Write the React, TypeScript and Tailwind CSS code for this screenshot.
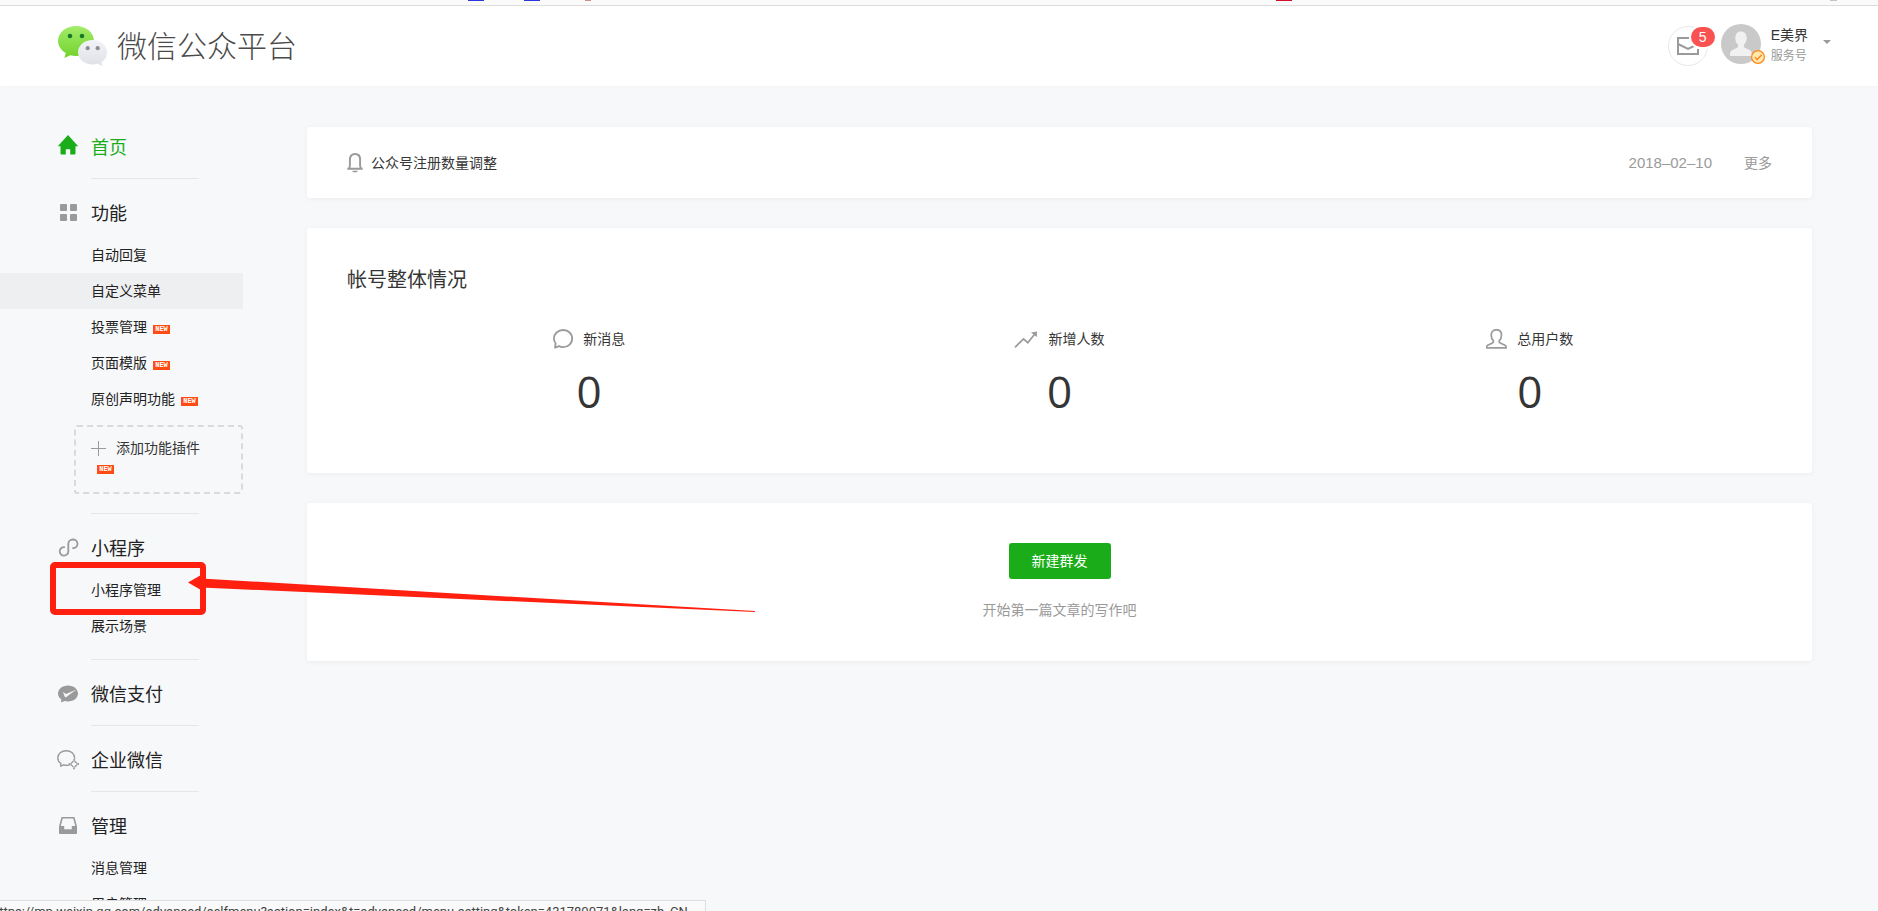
import type { ReactNode } from 'react'

type NavItem = { name: string; isNew?: boolean; active?: boolean; marked?: boolean }

type NavSection = {
  id: string
  name: string
  icon: ReactNode
  current?: boolean
  items?: NavItem[]
  plugin?: boolean
}

function HomeIcon() {
  return (
    <svg viewBox="0 1 22 22" className="h-[22px] w-[22px] overflow-visible" fill="#1aad19" aria-hidden="true">
      <path d="M11 0 .8 11.2h2.700v7.300c0 .6.4 1 1 1h4.300v-5.200h4.400v5.200h4.300c.6 0 1-.4 1-1v-7.300h2.700z" />
    </svg>
  )
}

function GridIcon() {
  return (
    <svg viewBox="0 0 22 22" className="h-[22px] w-[22px]" fill="#9a9a9a" aria-hidden="true">
      <rect x="3" y="2" width="7" height="7" rx="1" />
      <rect x="13" y="2" width="7" height="7" rx="1" />
      <rect x="3" y="12" width="7" height="7" rx="1" />
      <rect x="13" y="12" width="7" height="7" rx="1" />
    </svg>
  )
}

function MiniProgramIcon() {
  return (
    <svg viewBox="0 0 22 22" className="h-[22px] w-[22px]" fill="none" stroke="#9a9a9a" strokeWidth="1.8" strokeLinecap="round" aria-hidden="true">
      <path d="M7.2 10.1A4.300 4.300 0 1 0 11.300 14.400V6.800A4.600 4.300 0 1 1 16 11.100" />
    </svg>
  )
}

function PayIcon() {
  return (
    <svg viewBox="0 0 22 22" className="h-[22px] w-[22px]" aria-hidden="true">
      <path d="M11 2.400c5.600 0 10 3.600 10 8s-4.400 8-10 8c-1.200 0-2.300-.2-3.300-.5L4 19.500l.3-3.300C2.300 14.800 1 12.700 1 10.400c0-4.400 4.500-8 10-8z" fill="#9a9a9a" />
      <path d="m5.900 8.900 3.100 2 10.800-4.400c-3.300 2.100-7 4.800-10.400 7.500-.7.500-1.300.3-1.600-.3z" fill="#f7f8fa" />
    </svg>
  )
}

function WorkIcon() {
  return (
    <svg viewBox="0 0 22 22" className="h-[22px] w-[22px]" fill="none" stroke="#9a9a9a" strokeWidth="1.400" strokeLinejoin="round" aria-hidden="true">
      <path d="M12.600 16c-1 .3-2.200.4-3.400.3-1 0-1.800-.2-2.600-.5L3.700 17.200l.2-2.700C1.900 13 .8 11.100.8 8.900.8 5 4.500 1.700 9.200 1.700c4.700 0 8.400 3.300 8.400 7.200v.9" />
      <path d="m17 11.500 3.600 3.600-3.600 3.600-3.600-3.600z" strokeWidth="1.300" strokeDasharray="3.600 1.500" strokeDashoffset="-.8" />
      <path d="M17.200 10.700v.4M21 15h.4M17 19.200v.3M13 15h-.4" strokeWidth="1.800" strokeLinecap="round" />
    </svg>
  )
}

function ManageIcon() {
  return (
    <svg viewBox="0 0 22 22" className="h-[22px] w-[22px]" fill="#9a9a9a" aria-hidden="true">
      <path
        fillRule="evenodd"
        d="M5.300 2h11.400c.6 0 1 .3 1.100.9L20 11.500V18c0 .6-.4 1-1 1H3c-.6 0-1-.4-1-1v-6.500l2.200-8.600c.1-.6.5-.9 1.100-.9zm.5 1.500L3.800 11h3.400v3.200h7.600V11h3.400l-2-7.500z"
      />
    </svg>
  )
}

const sections: NavSection[] = [
  { id: 'home', name: '首页', icon: <HomeIcon />, current: true },
  {
    id: 'features',
    name: '功能',
    icon: <GridIcon />,
    plugin: true,
    items: [
      { name: '自动回复' },
      { name: '自定义菜单', active: true },
      { name: '投票管理', isNew: true },
      { name: '页面模版', isNew: true },
      { name: '原创声明功能', isNew: true },
    ],
  },
  {
    id: 'mini',
    name: '小程序',
    icon: <MiniProgramIcon />,
    items: [{ name: '小程序管理', marked: true }, { name: '展示场景' }],
  },
  { id: 'pay', name: '微信支付', icon: <PayIcon /> },
  { id: 'work', name: '企业微信', icon: <WorkIcon /> },
  {
    id: 'manage',
    name: '管理',
    icon: <ManageIcon />,
    items: [{ name: '消息管理' }, { name: '用户管理' }],
  },
]

const stats = [
  {
    name: '新消息',
    value: 0,
    icon: (
      <svg viewBox="0 0 20 20" className="h-5 w-5" fill="none" stroke="#9a9a9a" strokeWidth="1.800" strokeLinejoin="round" aria-hidden="true">
        <path d="M10.200 1c5.200 0 9 3.800 9 8.500s-3.800 8.600-9 8.600c-1.500 0-3-.3-4.200-1l-3.900 1.500.5-4.300C1.500 12.900.9 11.300.9 9.500.9 4.800 5 1 10.200 1z" />
      </svg>
    ),
  },
  {
    name: '新增人数',
    value: 0,
    icon: (
      <svg viewBox="0 0 24 20" className="h-5 w-6" fill="none" stroke="#9a9a9a" strokeWidth="1.700" aria-hidden="true">
        <path d="m1 18.300 8.500-8.500 4.300 3.900 7-8.700" />
        <path d="m17 3.400 6-1-.2 5.600z" fill="#9a9a9a" stroke="none" />
      </svg>
    ),
  },
  {
    name: '总用户数',
    value: 0,
    icon: (
      <svg viewBox="0 0 21 20" className="h-5 w-[21px]" fill="none" stroke="#9a9a9a" strokeWidth="1.700" strokeLinejoin="round" aria-hidden="true">
        <path d="M10.300.8c3.200 0 5.200 2.200 5.200 5.300 0 2.400-.8 4.400-2.200 5.600-.4 1.400.1 1.900 1.400 2.500l4.300 2.100c.8.400 1.200 1.100 1.200 2.600H.6c0-1.500.3-2.200 1.100-2.600L6 14.200c1.300-.6 1.700-1.100 1.300-2.500C6 10.500 5.200 8.500 5.200 6.100c0-3.100 2-5.300 5.100-5.300z" />
      </svg>
    ),
  },
]

function NewTag() {
  return (
    <span className="ml-[6px] mt-1 flex h-[9px] w-[17px] shrink-0 items-center justify-center bg-[#ff4c14] font-['Liberation_Mono',monospace] text-[7px] leading-none font-bold text-white">
      NEW
    </span>
  )
}

// Red frame and arrow drawn over the menu entry
function Marker() {
  return (
    <>
      <span className="pointer-events-none absolute -top-[10px] left-[50px] z-10 h-[53px] w-[156px] rounded-[5px] border-[6px] border-[#ff2010]" />
      <svg viewBox="0 0 567 37" className="pointer-events-none absolute top-[3px] left-[188px] z-10 h-[37px] w-[567px]" fill="#ff2010" aria-hidden="true">
        <path d="M0 7.500 13 0v3.500L567 36v1L13 12.500V15z" />
      </svg>
    </>
  )
}

function Header() {
  return (
    <header className="flex h-20 items-center justify-between bg-white pr-[47px] pl-[58px] shadow-[0_1px_3px_rgba(0,0,0,0.02)]">
      <a href="#" className="flex items-center gap-[10px] text-[30px] leading-10 font-light text-[#4a4a4a]">
        <svg viewBox="0 0 49 40" className="h-10 w-[49px]" aria-hidden="true">
          <defs>
            <linearGradient id="green" x1="0" y1="0" x2="0" y2="1">
              <stop offset="0" stopColor="#a3ec6b" />
              <stop offset="1" stopColor="#72d22a" />
            </linearGradient>
            <linearGradient id="grey" x1="0" y1="0" x2="0" y2="1">
              <stop offset="0" stopColor="#f3f4f9" />
              <stop offset="1" stopColor="#dfe0e6" />
            </linearGradient>
          </defs>
          <path d="M18 0c9.900 0 18 6.600 18 15s-8.100 15-18 15c-2.100 0-4-.3-5.800-.8L6.400 32l1.400-5C3.100 24.300 0 20 0 15 0 6.600 8.100 0 18 0z" fill="url(#green)" />
          <circle cx="12" cy="10" r="2.300" fill="#187a2a" />
          <circle cx="24" cy="10" r="2.300" fill="#187a2a" />
          <path d="M34.600 14C42.600 14 49 19.500 49 26.400c0 4.200-2.300 7.800-5.800 10l1.500 3.600-5-2.200c-1.600.5-3.300.8-5.100.8-8 0-14.600-5.500-14.600-12.300S26.600 14 34.600 14z" fill="url(#grey)" />
          <circle cx="29.700" cy="22.200" r="2.100" fill="#8c8f92" />
          <circle cx="39.700" cy="22.200" r="2.100" fill="#8c8f92" />
        </svg>
        微信公众平台
      </a>

      <div className="flex items-center">
        <button type="button" aria-label="通知" className="relative mr-[13px] flex h-10 w-10 items-center justify-center rounded-full border border-[#e7e8eb]">
          <svg viewBox="0 0 22 18" className="h-[18px] w-[22px]" fill="none" stroke="#9a9a9a" strokeWidth="2" aria-hidden="true">
            <path d="M12 1H1v16h20v-5M1 7l10 5 6-3" />
          </svg>
          <span className="absolute top-0 -right-2 flex h-5 w-6 items-center justify-center rounded-full bg-[#fa5151] font-['Liberation_Sans',sans-serif] text-sm leading-none text-white ring-2 ring-white">
            5
          </span>
        </button>

        <button type="button" className="flex items-center text-left">
          <span className="relative -mt-1 mr-[10px] h-10 w-10">
            <svg viewBox="0 0 40 40" className="h-10 w-10" aria-hidden="true">
              <circle cx="20" cy="20" r="20" fill="#c9c9c9" />
              <path d="M20 7.500c3.500 0 5.700 2.700 5.700 6.500 0 3-1.200 5.400-2.700 6.700-.6 2 .2 2.700 2 3.500l3.500 1.700c1.800.9 2.500 2 2.500 6H9c0-4 .7-5.100 2.500-6l3.500-1.700c1.800-.8 2.600-1.500 2-3.500-1.500-1.300-2.700-3.700-2.700-6.700 0-3.800 2.200-6.500 5.700-6.500z" fill="#f1f1f1" />
            </svg>
            <svg viewBox="0 0 14 14" className="absolute -right-1 bottom-0 h-[14px] w-[14px]" fill="none" stroke="#ff8412" aria-hidden="true">
              <circle cx="7" cy="7" r="6.400" fill="#ffe9b0" strokeWidth="1.200" />
              <path d="m3.800 7 2.400 2.500 4.600-4.800" strokeWidth="1.300" />
            </svg>
          </span>
          <span className="mr-[15px] flex flex-col">
            <span className="font-['Liberation_Sans','Noto_Sans_CJK_SC',sans-serif] text-sm leading-5 text-[#353535]">E美界</span>
            <span className="text-xs leading-[22px] text-[#9a9a9a]">服务号</span>
          </span>
          <span className="-mt-2 h-0 w-0 border-x-4 border-t-4 border-x-transparent border-t-[#9a9a9a]" />
        </button>
      </div>
    </header>
  )
}

function Sidebar() {
  return (
    <nav className="w-[243px] shrink-0 pt-[27px] text-[#222]">
      {sections.map((section, index) => (
        <section key={section.id} className="pb-[15px]">
          {/* the rule sits above every section but the first */}
          {index > 0 && <hr className="ml-[91px] w-[108px] border-[#e4e6e8]" />}
          <div className="pt-[17px]">
            <a href="#" className={`flex h-[33px] items-center gap-3 pl-[57px] text-lg ${section.current ? 'text-[#1aad19]' : ''}`}>
              {section.icon}
              {section.name}
            </a>
          </div>
          {section.items && (
            <ul className="mt-2">
              {section.items.map((item) => (
                <li key={item.name} className="relative">
                  <a href="#" className={`flex h-9 items-center pl-[91px] text-sm ${item.active ? 'bg-[#eeeff1]' : ''}`}>
                    {item.name}
                    {item.isNew && <NewTag />}
                  </a>
                  {item.marked && <Marker />}
                </li>
              ))}
            </ul>
          )}
          {section.plugin && (
            <a href="#" className="mt-2 mb-1 ml-[74px] block h-[69px] rounded-[3px] border-2 border-dashed border-[#d9dadc] pt-2 pl-[15px] text-sm text-[#353535]">
              <span className="flex h-[26px] items-center gap-[10px]">
                <svg viewBox="0 0 15 15" className="h-[15px] w-[15px]" stroke="#9a9a9a" aria-hidden="true">
                  <path d="M7.500 0v15M0 7.500h15" />
                </svg>
                添加功能插件
              </span>
              <NewTag />
            </a>
          )}
        </section>
      ))}
    </nav>
  )
}

export default function App() {
  return (
    <div className="flex h-screen flex-col overflow-hidden bg-[#f7f8fa] font-['Noto_Sans','Noto_Sans_CJK_SC',sans-serif]">
      {/* Bottom edge of the browser toolbar */}
      <div className="relative h-[6px] shrink-0 border-b border-[#dcdcdc] bg-[#fafafa]">
        <span className="absolute top-0 left-[468px] h-px w-4 bg-[#2b35df]" />
        <span className="absolute top-0 left-[524px] h-px w-4 bg-[#2b35df]" />
        <span className="absolute top-0 left-[585px] h-px w-[6px] bg-[#cf8f8f]" />
        <span className="absolute top-0 left-[1276px] h-px w-4 bg-[#d0112b]" />
        <span className="absolute top-0 left-[1830px] h-px w-[7px] bg-[#c4c4c8]" />
      </div>

      <div className="shrink-0">
        <Header />
      </div>

      <div className="flex min-h-0 flex-1">
        <Sidebar />

        <main className="flex min-w-0 flex-1 flex-col gap-[30px] pt-[41px] pr-[66px] pl-16 text-sm text-[#353535]">
          {/* Notice */}
          <section className="flex h-[71px] shrink-0 items-center rounded-[3px] bg-white px-10 shadow-[0_1px_5px_rgba(0,0,0,0.05)]">
            <svg viewBox="0 0 16 20" className="mr-2 h-5 w-4" fill="none" stroke="#9a9a9a" strokeWidth="1.900" aria-hidden="true">
              <path d="M.3 15.700h15.400M2 15.500c.6-1 .9-2.200.9-3.600V6.500C2.900 3.200 4.900 1 8 1s5.100 2.200 5.100 5.500v5.400c0 1.400.3 2.600.9 3.600" />
              <path d="M5 17.800h6c-.5 1.100-1.600 1.700-3 1.700s-2.500-.6-3-1.700z" fill="#9a9a9a" stroke="none" />
            </svg>
            <a href="#">公众号注册数量调整</a>
            <time dateTime="2018-02-10" className="ml-auto font-['Liberation_Sans',sans-serif] text-[15px] text-[#9a9a9a]">
              2018–02–10
            </time>
            <a href="#" className="ml-8 text-[#9a9a9a]">
              更多
            </a>
          </section>

          {/* Account overview */}
          <section className="shrink-0 rounded-[3px] bg-white pt-[37px] pb-[54px] shadow-[0_1px_5px_rgba(0,0,0,0.05)]">
            <h2 className="px-10 text-xl leading-[30px]">帐号整体情况</h2>
            <div className="mt-[34px] grid grid-cols-3 px-[47px]">
              {stats.map((stat) => (
                <a key={stat.name} href="#" className="flex flex-col items-center">
                  <span className="flex h-5 items-center gap-[10px]">
                    {stat.icon}
                    {stat.name}
                  </span>
                  <span className="mt-[14px] font-['Open_Sans',sans-serif] text-[44px] leading-[56px]">{stat.value}</span>
                </a>
              ))}
            </div>
          </section>

          {/* Broadcast */}
          <section className="flex shrink-0 flex-col items-center rounded-[3px] bg-white py-10 shadow-[0_1px_5px_rgba(0,0,0,0.05)]">
            <button type="button" className="h-9 w-[102px] rounded-[3px] bg-[#1aad19] text-white">
              新建群发
            </button>
            <p className="mt-5 leading-[22px] text-[#9a9a9a]">开始第一篇文章的写作吧</p>
          </section>
        </main>
      </div>

      {/* Link preview at the bottom of the browser */}
      <div className="fixed bottom-0 left-0 z-20 h-[11px] w-[706px] overflow-hidden border-t border-r border-[#dcdfe1] bg-[#fafafa]">
        <p className="-ml-2 pt-[2px] font-['Roboto',sans-serif] text-[13px] leading-[18px] whitespace-nowrap text-[#444]">
          https://mp.weixin.qq.com/advanced/selfmenu?action=index&amp;t=advanced/menu-setting&amp;token=431780071&amp;lang=zh_CN
        </p>
      </div>
    </div>
  )
}
